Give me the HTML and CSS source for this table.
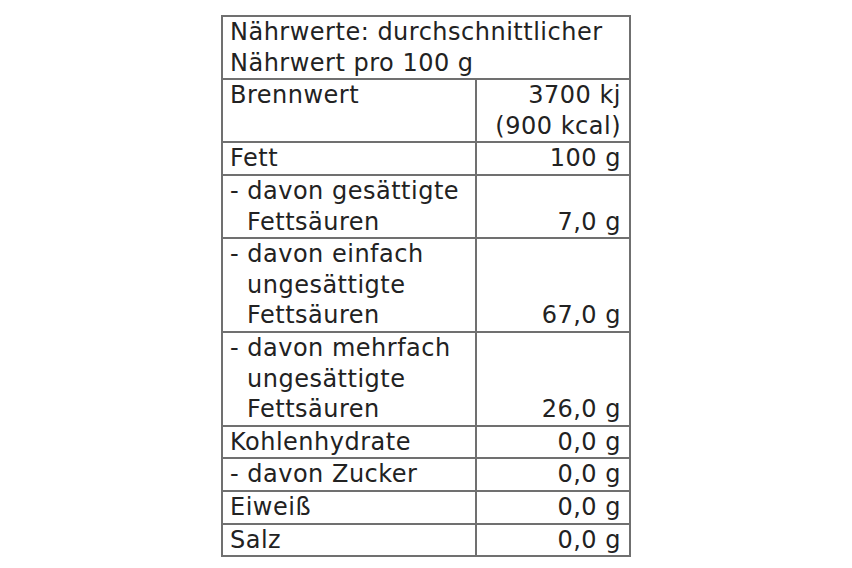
FILE: index.html
```html
<!DOCTYPE html>
<html lang="de">
<head>
<meta charset="utf-8">
<link rel="stylesheet" href="styles.css">
</head>
<body>
<div class="page">
<table class="nutri">
  <colgroup><col class="c1"><col class="c2"></colgroup>
  <tr><td colspan="2" class="head">Nährwerte: durchschnittlicher Nährwert pro 100 g</td></tr>
  <tr><td class="lbl">Brennwert</td><td class="val top">3700 kj<br>(900 kcal)</td></tr>
  <tr><td class="lbl">Fett</td><td class="val">100 g</td></tr>
  <tr><td class="lbl sub">- davon gesättigte Fettsäuren</td><td class="val">7,0 g</td></tr>
  <tr><td class="lbl sub">- davon einfach ungesättigte Fettsäuren</td><td class="val">67,0 g</td></tr>
  <tr><td class="lbl sub">- davon mehrfach ungesättigte Fettsäuren</td><td class="val">26,0 g</td></tr>
  <tr><td class="lbl">Kohlenhydrate</td><td class="val">0,0 g</td></tr>
  <tr><td class="lbl">- davon Zucker</td><td class="val">0,0 g</td></tr>
  <tr><td class="lbl">Eiweiß</td><td class="val">0,0 g</td></tr>
  <tr><td class="lbl">Salz</td><td class="val">0,0 g</td></tr>
</table>
</div>
</body>
</html>
```
FILE: styles.css
```css
html, body {
  margin: 0;
  padding: 0;
  background: #ffffff;
}
.page {
  display: flex;
  justify-content: center;
  padding-top: 15px;
}
.nutri {
  border-collapse: collapse;
  width: 408px;
  table-layout: fixed;
  font-family: "DejaVu Sans", "Open Sans", sans-serif;
  font-size: 24px;
  letter-spacing: 0.5px;
  line-height: 30.6px;
  color: #222;
}
.c1 { width: 254px; }
.c2 { width: 154px; }
.nutri td {
  border: 2px solid #707070;
  padding: 0 8px 0 7px;
  vertical-align: top;
}
.nutri td.head {
  padding-right: 2px;
}
.nutri td.sub {
  padding-left: 24px;
  text-indent: -17px;
}
.nutri td.val {
  text-align: right;
  vertical-align: bottom;
  white-space: nowrap;
  padding-right: 8px;
}
.nutri td.val.top {
  vertical-align: top;
}
```
